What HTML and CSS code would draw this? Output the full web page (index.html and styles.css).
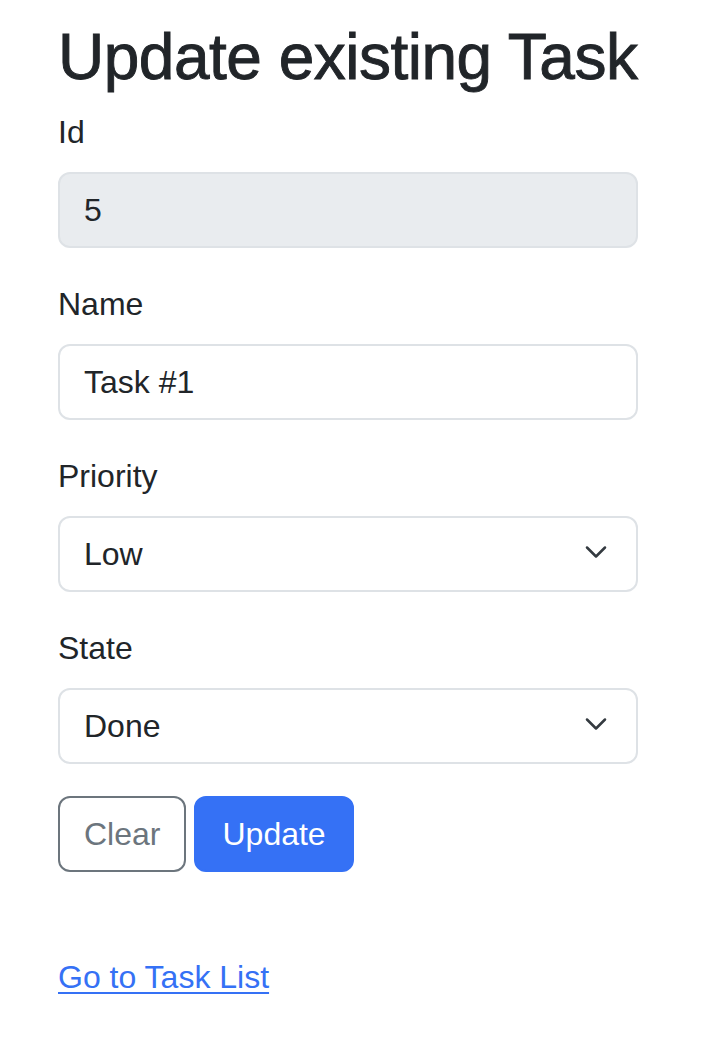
FILE: index.html
```html
<!DOCTYPE html>
<html lang="en">
<head>
<meta charset="utf-8">
<title>Update existing Task</title>
<link rel="stylesheet" href="styles.css">
</head>
<body>
<main class="page">
  <h1 class="title">Update existing Task</h1>
  <form class="task-form">
    <div class="field">
      <label class="label" for="id">Id</label>
      <input class="control control-disabled" id="id" type="text" value="5" disabled>
    </div>
    <div class="field">
      <label class="label" for="name">Name</label>
      <input class="control" id="name" type="text" value="Task #1">
    </div>
    <div class="field">
      <label class="label" for="priority">Priority</label>
      <div class="select-wrap">
        <select class="control select" id="priority">
          <option selected>Low</option>
          <option>Medium</option>
          <option>High</option>
        </select>
        <svg class="chevron" viewBox="0 0 16 16" width="24" height="24" aria-hidden="true"><path d="m2 5 6 6 6-6" fill="none" stroke="#343a40" stroke-width="1.7" stroke-linecap="round" stroke-linejoin="round"/></svg>
      </div>
    </div>
    <div class="field">
      <label class="label" for="state">State</label>
      <div class="select-wrap">
        <select class="control select" id="state">
          <option>Open</option>
          <option>In progress</option>
          <option selected>Done</option>
        </select>
        <svg class="chevron" viewBox="0 0 16 16" width="24" height="24" aria-hidden="true"><path d="m2 5 6 6 6-6" fill="none" stroke="#343a40" stroke-width="1.7" stroke-linecap="round" stroke-linejoin="round"/></svg>
      </div>
    </div>
    <div class="actions">
      <button type="reset" class="btn btn-outline">Clear</button>
      <button type="submit" class="btn btn-primary">Update</button>
    </div>
  </form>
  <p class="back"><a class="link" href="#">Go to Task List</a></p>
</main>
</body>
</html>
```

FILE: styles.css
```css
html, body {
  margin: 0;
  padding: 0;
  background: #ffffff;
}

body {
  font-family: "Liberation Sans", Arial, sans-serif;
  font-size: 32px;
  line-height: 48px;
  color: #212529;
}

.page {
  width: 580px;
  padding: 19px 0 0 58px;
}

.title {
  margin: 0 0 12px 0;
  font-size: 64px;
  line-height: 77px;
  font-weight: 500;
  letter-spacing: -0.5px;
  -webkit-text-stroke: 0.9px #212529;
  color: #212529;
}

.task-form {
  margin: 0;
}

.field {
  margin-bottom: 32px;
}

.label {
  display: block;
  margin-bottom: 16px;
  font-size: 32px;
  line-height: 48px;
}

.control {
  display: block;
  box-sizing: border-box;
  width: 100%;
  height: 76px;
  margin: 0;
  padding: 12px 24px;
  font-family: "Liberation Sans", Arial, sans-serif;
  font-size: 32px;
  line-height: 48px;
  color: #212529;
  background: #ffffff;
  border: 2px solid #dee2e6;
  border-radius: 12px;
  outline: none;
}

.control-disabled {
  background: #e9ecef;
  opacity: 1;
  -webkit-text-fill-color: #212529;
}

.select-wrap {
  position: relative;
}

.select {
  appearance: none;
  -webkit-appearance: none;
  padding-right: 72px;
}

.chevron {
  position: absolute;
  right: 30px;
  top: 24px;
  pointer-events: none;
}

.actions {
  display: flex;
  gap: 8px;
}

.btn {
  box-sizing: border-box;
  height: 76px;
  padding: 12px 24px;
  font-family: "Liberation Sans", Arial, sans-serif;
  font-size: 32px;
  line-height: 48px;
  border: 2px solid transparent;
  border-radius: 12px;
  cursor: pointer;
}

.btn-outline {
  color: #6c757d;
  background: #ffffff;
  border-color: #6c757d;
}

.btn-primary {
  color: #ffffff;
  background: #3571f5;
  border-color: #3571f5;
  padding: 12px 26px;
}

.back {
  margin: 81px 0 0 0;
}

.link {
  color: #3571f5;
  text-decoration: underline;
  text-underline-offset: 4px;
  text-decoration-thickness: 2px;
}
```
